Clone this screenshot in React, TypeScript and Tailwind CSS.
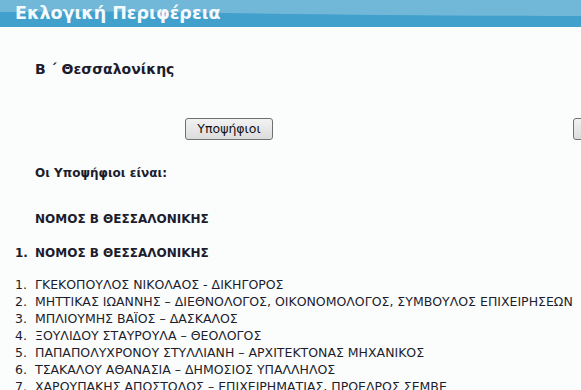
export default function App() {
  const items = [
    "ΓΚΕΚΟΠΟΥΛΟΣ ΝΙΚΟΛΑΟΣ - ΔΙΚΗΓΟΡΟΣ",
    "ΜΗΤΤΙΚΑΣ ΙΩΑΝΝΗΣ – ΔΙΕΘΝΟΛΟΓΟΣ, ΟΙΚΟΝΟΜΟΛΟΓΟΣ, ΣΥΜΒΟΥΛΟΣ ΕΠΙΧΕΙΡΗΣΕΩΝ",
    "ΜΠΛΙΟΥΜΗΣ ΒΑΪΟΣ – ΔΑΣΚΑΛΟΣ",
    "ΞΟΥΛΙΔΟΥ ΣΤΑΥΡΟΥΛΑ – ΘΕΟΛΟΓΟΣ",
    "ΠΑΠΑΠΟΛΥΧΡΟΝΟΥ ΣΤΥΛΛΙΑΝΗ – ΑΡΧΙΤΕΚΤΟΝΑΣ ΜΗΧΑΝΙΚΟΣ",
    "ΤΣΑΚΑΛΟΥ ΑΘΑΝΑΣΙΑ – ΔΗΜΟΣΙΟΣ ΥΠΑΛΛΗΛΟΣ",
    "ΧΑΡΟΥΠΑΚΗΣ ΑΠΟΣΤΟΛΟΣ – ΕΠΙΧΕΙΡΗΜΑΤΙΑΣ, ΠΡΟΕΔΡΟΣ ΣΕΜΒΕ",
  ]

  return (
    <div className="h-[390px] w-[581px] overflow-hidden bg-[#fbfdfd] font-['DejaVu_Sans',sans-serif] text-[12px] text-[#1c1c2c]">
      {/* header bar */}
      <div className="relative h-[27px] bg-[#42a0cc]">
        <svg className="absolute inset-0" width="581" height="27" viewBox="0 0 581 27" preserveAspectRatio="none">
          <path d="M0 0 H581 V16 C450 16 300 14 140 12 C80 11 30 12 0 12 Z" fill="#70b7d8" />
        </svg>
        <h1 className="relative pl-[15px] pt-[3px] text-[17.5px] font-bold leading-[20px] text-[#f4fafd]">
          Εκλογική Περιφέρεια
        </h1>
      </div>

      <div className="pl-[35px]">
        <h2 className="pt-[33px] text-[14px] font-bold leading-[18px] whitespace-pre">Β ΄ Θεσσαλονίκης</h2>
      </div>

      {/* buttons row */}
      <div className="mt-[40px] flex h-[22px]">
        <button className="ml-[185px] h-[22px] w-[88px] shrink-0 rounded-[3px] border border-[#707070] bg-gradient-to-b from-[#f2f2f2] to-[#dcdcdc] text-[12.5px] leading-none text-[#111]">
          Υποψήφιοι
        </button>
        <button className="ml-[300px] h-[22px] w-[40px] shrink-0 rounded-[3px] border border-[#707070] bg-gradient-to-b from-[#f2f2f2] to-[#dcdcdc]" />
      </div>

      <div className="pl-[35px]">
        <p className="mt-[26px] font-bold leading-[15px]">Οι Υποψήφιοι είναι:</p>
        <p className="mt-[31px] font-bold leading-[15px]">ΝΟΜΟΣ Β ΘΕΣΣΑΛΟΝΙΚΗΣ</p>
      </div>

      <ol className="mt-[19px] leading-[15px]">
        <li className="flex font-bold">
          <span className="w-[35px] pl-[15px]">1.</span>
          <span>ΝΟΜΟΣ Β ΘΕΣΣΑΛΟΝΙΚΗΣ</span>
        </li>
      </ol>

      <ol className="mt-[15px] text-[12.5px] leading-[17px]">
        {items.map((item, i) => (
          <li key={i} className="flex whitespace-nowrap">
            <span className="w-[35px] shrink-0 pl-[15px]">{i + 1}.</span>
            <span>{item}</span>
          </li>
        ))}
      </ol>
    </div>
  )
}
